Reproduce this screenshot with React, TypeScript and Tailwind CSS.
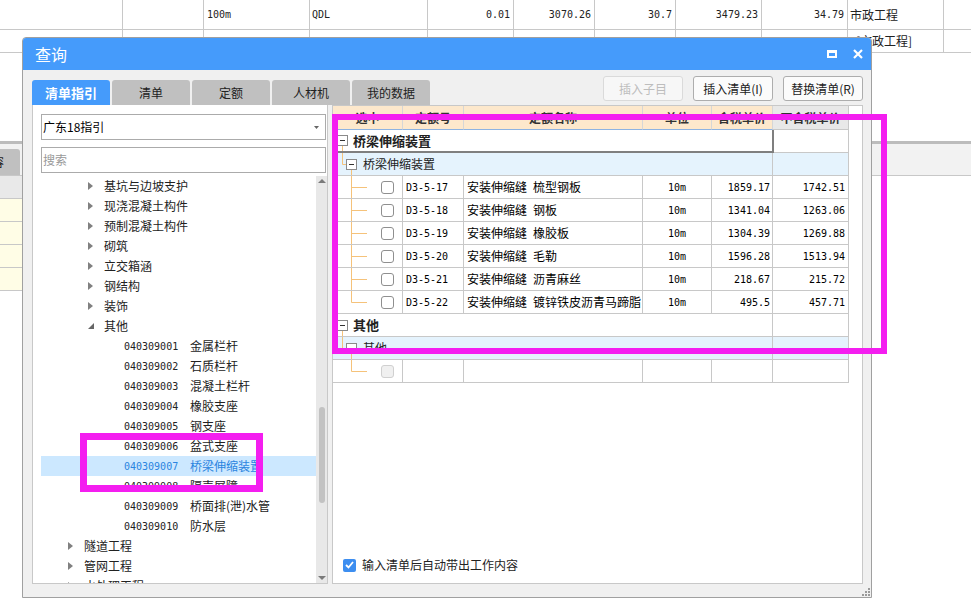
import React from "react";

const MONO = "font-['DejaVu_Sans_Mono',monospace] text-[10px]";
const ORANGE = "#f5c27a";

function BgRow1() {
  return (
    <div className="flex h-[30px] border-b border-[#c8c8c8] text-[12px]">
      <div className="w-[123px] shrink-0 border-r border-[#c8c8c8]" />
      <div className="w-[81px] shrink-0 border-r border-[#c8c8c8]" />
      <div className={"w-[106px] shrink-0 border-r border-[#c8c8c8] flex items-center pl-[3px] " + MONO}>100m</div>
      <div className={"w-[118px] shrink-0 border-r border-[#c8c8c8] flex items-center pl-[2px] " + MONO}>QDL</div>
      <div className={"w-[86px] shrink-0 border-r border-[#c8c8c8] flex items-center justify-end pr-[3px] " + MONO}>0.01</div>
      <div className={"w-[81px] shrink-0 border-r border-[#c8c8c8] flex items-center justify-end pr-[3px] " + MONO}>3070.26</div>
      <div className={"w-[81px] shrink-0 border-r border-[#c8c8c8] flex items-center justify-end pr-[3px] " + MONO}>30.7</div>
      <div className={"w-[86px] shrink-0 border-r border-[#c8c8c8] flex items-center justify-end pr-[3px] " + MONO}>3479.23</div>
      <div className={"w-[86px] shrink-0 border-r border-[#c8c8c8] flex items-center justify-end pr-[3px] " + MONO}>34.79</div>
      <div className="w-[96px] shrink-0 border-r border-[#c8c8c8] flex items-center pl-[2px]">市政工程</div>
      <div className="flex-1" />
    </div>
  );
}

function BgRow2() {
  return (
    <div className="flex h-[23px] border-b border-[#c8c8c8] text-[12px]">
      <div className="w-[123px] shrink-0 border-r border-[#c8c8c8]" />
      <div className="w-[81px] shrink-0 border-r border-[#c8c8c8]" />
      <div className="w-[106px] shrink-0 border-r border-[#c8c8c8]" />
      <div className="w-[118px] shrink-0 border-r border-[#c8c8c8]" />
      <div className="w-[86px] shrink-0 border-r border-[#c8c8c8]" />
      <div className="w-[81px] shrink-0 border-r border-[#c8c8c8]" />
      <div className="w-[81px] shrink-0 border-r border-[#c8c8c8]" />
      <div className="w-[86px] shrink-0 border-r border-[#c8c8c8]" />
      <div className="w-[86px] shrink-0 border-r border-[#c8c8c8]" />
      <div className="w-[96px] shrink-0 border-r border-[#c8c8c8] flex items-center pl-[8px]">[市政工程]</div>
      <div className="flex-1" />
    </div>
  );
}

function Background() {
  return (
    <div className="flex flex-col">
      <BgRow1 />
      <BgRow2 />
      <div className="h-[88px]" />
      <div className="h-[3px] bg-[#bcbcbc]" />
      <div className="h-[32px] bg-[#f2f2f2] border-b border-[#c8c8c8] flex">
        <div className="-ml-[60px] w-[80px] mt-[5px] h-[26px] bg-[#c0c0c0] rounded-t-[3px] flex items-center justify-center text-[12px]">
          工作内容
        </div>
      </div>
      <div className="flex">
        <div className="w-[300px] flex flex-col">
          <div className="h-[23px] bg-[#e9e9e9] border-b border-[#c8c8c8]" />
          <div className="h-[23px] bg-[#fffde6] border-b border-[#c8c8c8]" />
          <div className="h-[23px] bg-[#fffde6] border-b border-[#c8c8c8]" />
          <div className="h-[23px] bg-[#fffde6] border-b border-[#c8c8c8]" />
          <div className="h-[23px] bg-[#fffde6] border-b border-[#c8c8c8]" />
        </div>
      </div>
    </div>
  );
}

function ArrowRight() {
  return (
    <svg width="5" height="8" viewBox="0 0 5 8" className="shrink-0">
      <path d="M0 0L5 4L0 8Z" fill="#808080" />
    </svg>
  );
}

function ArrowOpen() {
  return (
    <svg width="6" height="6" viewBox="0 0 6 6" className="shrink-0">
      <path d="M6 0V6H0Z" fill="#666" />
    </svg>
  );
}

type TreeItem =
  | { kind: "cat2" | "open2" | "cat1"; text: string }
  | { kind: "code"; code: string; text: string; sel?: boolean };

const TREE: TreeItem[] = [
  { kind: "cat2", text: "基坑与边坡支护" },
  { kind: "cat2", text: "现浇混凝土构件" },
  { kind: "cat2", text: "预制混凝土构件" },
  { kind: "cat2", text: "砌筑" },
  { kind: "cat2", text: "立交箱涵" },
  { kind: "cat2", text: "钢结构" },
  { kind: "cat2", text: "装饰" },
  { kind: "open2", text: "其他" },
  { kind: "code", code: "040309001", text: "金属栏杆" },
  { kind: "code", code: "040309002", text: "石质栏杆" },
  { kind: "code", code: "040309003", text: "混凝土栏杆" },
  { kind: "code", code: "040309004", text: "橡胶支座" },
  { kind: "code", code: "040309005", text: "钢支座" },
  { kind: "code", code: "040309006", text: "盆式支座" },
  { kind: "code", code: "040309007", text: "桥梁伸缩装置", sel: true },
  { kind: "code", code: "040309008", text: "隔声屏障" },
  { kind: "code", code: "040309009", text: "桥面排(泄)水管" },
  { kind: "code", code: "040309010", text: "防水层" },
  { kind: "cat1", text: "隧道工程" },
  { kind: "cat1", text: "管网工程" },
  { kind: "cat1", text: "水处理工程" },
];

function TreeRow({ item }: { item: TreeItem }) {
  if (item.kind === "code") {
    return (
      <div
        className={
          item.sel
            ? "h-[20px] shrink-0 flex items-center pl-[83px] text-[12px] bg-[#cce8ff] text-[#2a84e0]"
            : "h-[20px] shrink-0 flex items-center pl-[83px] text-[12px]"
        }
      >
        <span className={"w-[66px] shrink-0 " + MONO}>{item.code}</span>
        <span className="whitespace-nowrap">{item.text}</span>
      </div>
    );
  }
  if (item.kind === "open2") {
    return (
      <div className="h-[20px] shrink-0 flex items-center pl-[47px] text-[12px]">
        <ArrowOpen />
        <span className="ml-[10px]">{item.text}</span>
      </div>
    );
  }
  if (item.kind === "cat1") {
    return (
      <div className="h-[20px] shrink-0 flex items-center pl-[27px] text-[12px]">
        <ArrowRight />
        <span className="ml-[11px]">{item.text}</span>
      </div>
    );
  }
  return (
    <div className="h-[20px] shrink-0 flex items-center pl-[47px] text-[12px]">
      <ArrowRight />
      <span className="ml-[11px]">{item.text}</span>
    </div>
  );
}

function LeftPanel() {
  return (
    <div className="w-[296px] h-full shrink-0 bg-white border-x border-b border-[#c8c8c8] flex flex-col">
      <div className="mt-[9px] ml-[8px] w-[285px] h-[26px] shrink-0 border border-[#ababab] flex items-center pl-[1px] pr-[6px] text-[12px] text-black">
        <span>广东18指引</span>
        <svg width="5" height="3" viewBox="0 0 5 3" className="ml-auto">
          <path d="M0 0H5L2.5 3Z" fill="#666" />
        </svg>
      </div>
      <div className="mt-[7px] ml-[8px] w-[285px] h-[26px] shrink-0 border border-[#ababab] flex items-center pl-[1px] text-[12px] text-[#999]">
        搜索
      </div>
      <div className="mt-[3px] ml-[8px] flex flex-1 min-h-0">
        <div className="w-[275px] flex flex-col overflow-hidden">
          {TREE.map((it, i) => (
            <TreeRow key={i} item={it} />
          ))}
        </div>
        <div className="w-[11px] bg-[#e8e8e8] flex flex-col items-center">
          <div className="h-[10px] flex items-center">
            <svg width="8" height="4" viewBox="0 0 8 4">
              <path d="M0 4L4 0L8 4Z" fill="#7a7a7a" />
            </svg>
          </div>
          <div className="mt-[221px] w-[6px] h-[96px] rounded-full bg-[#c2c2c2]" />
          <div className="flex-1" />
          <div className="h-[10px] flex items-center">
            <svg width="8" height="4" viewBox="0 0 8 4">
              <path d="M0 0L8 0L4 4Z" fill="#7a7a7a" />
            </svg>
          </div>
        </div>
      </div>
    </div>
  );
}

function MinusBox({ x, y }: { x: number; y: number }) {
  return (
    <g>
      <rect x={x + 0.5} y={y + 0.5} width="10" height="10" fill="white" stroke="#8a8a8a" />
      <line x1={x + 3} x2={x + 8} y1={y + 5.5} y2={y + 5.5} stroke="#333" />
    </g>
  );
}

function GroupRow({ label, selected }: { label: string; selected?: boolean }) {
  return (
    <div className="flex h-[23px] shrink-0">
      <div
        className={
          selected
            ? "w-[441px] shrink-0 border-r-2 border-b-2 border-[#7f7f7f] flex items-center"
            : "w-[440px] shrink-0 border-r border-b border-[#c8c8c8] flex items-center"
        }
      >
        <svg width="20" height="21" viewBox="0 0 20 21" className="shrink-0">
          <line x1="9.5" x2="9.5" y1="16" y2="21" stroke={ORANGE} />
          <MinusBox x={4} y={5} />
        </svg>
        <span className="text-[13px] font-bold text-[#222]">{label}</span>
      </div>
      <div
        className={
          selected
            ? "w-[75px] shrink-0 border-r border-b border-[#c8c8c8]"
            : "w-[76px] shrink-0 border-r border-b border-[#c8c8c8]"
        }
      />
    </div>
  );
}

function SubRow({ label }: { label: string }) {
  return (
    <div className="flex h-[23px] shrink-0 bg-[#e5f3fd]">
      <div className="w-[440px] shrink-0 border-r border-b border-[#c8c8c8] flex items-center">
        <svg width="30" height="22" viewBox="0 0 30 22" className="shrink-0">
          <line x1="9.5" x2="9.5" y1="0" y2="11.5" stroke={ORANGE} />
          <line x1="9.5" x2="13" y1="11.5" y2="11.5" stroke={ORANGE} />
          <line x1="18.5" x2="18.5" y1="16" y2="22" stroke={ORANGE} />
          <MinusBox x={13} y={6} />
        </svg>
        <span className="text-[12px] text-[#222]">{label}</span>
      </div>
      <div className="w-[76px] shrink-0 border-r border-b border-[#c8c8c8]" />
    </div>
  );
}

type Item = { code: string; a: string; b: string; p1: string; p2: string };

const ITEMS: Item[] = [
  { code: "D3-5-17", a: "安装伸缩缝", b: "梳型钢板", p1: "1859.17", p2: "1742.51" },
  { code: "D3-5-18", a: "安装伸缩缝", b: "钢板", p1: "1341.04", p2: "1263.06" },
  { code: "D3-5-19", a: "安装伸缩缝", b: "橡胶板", p1: "1304.39", p2: "1269.88" },
  { code: "D3-5-20", a: "安装伸缩缝", b: "毛勒", p1: "1596.28", p2: "1513.94" },
  { code: "D3-5-21", a: "安装伸缩缝", b: "沥青麻丝", p1: "218.67", p2: "215.72" },
  { code: "D3-5-22", a: "安装伸缩缝", b: "镀锌铁皮沥青马蹄脂", p1: "495.5", p2: "457.71" },
];

function TreeCell({ last, disabled }: { last?: boolean; disabled?: boolean }) {
  return (
    <div className="w-[70px] shrink-0 border-r border-b border-[#c8c8c8] flex items-center">
      <svg width="48" height="22" viewBox="0 0 48 22" className="shrink-0">
        <line x1="18.5" x2="18.5" y1="0" y2={last ? 11.5 : 22} stroke={ORANGE} />
        <line x1="18.5" x2="34" y1="11.5" y2="11.5" stroke={ORANGE} />
      </svg>
      <div
        className={
          disabled
            ? "w-[13px] h-[13px] rounded-[3px] border border-[#d0d0d0] bg-[#f0f0f0]"
            : "w-[13px] h-[13px] rounded-[3px] border border-[#8f8f8f] bg-white"
        }
      />
    </div>
  );
}

function DataRow({ it, last }: { it: Item; last?: boolean }) {
  return (
    <div className="flex h-[23px] shrink-0 text-[12px] text-black">
      <TreeCell last={last} />
      <div className={"w-[61px] shrink-0 border-r border-b border-[#c8c8c8] flex items-center pl-[3px] " + MONO}>{it.code}</div>
      <div className="w-[179px] shrink-0 border-r border-b border-[#c8c8c8] flex items-center pl-[3px] whitespace-nowrap">
        {it.a}
        <span className="ml-[6px]">{it.b}</span>
      </div>
      <div className={"w-[69px] shrink-0 border-r border-b border-[#c8c8c8] flex items-center justify-center " + MONO}>10m</div>
      <div className={"w-[61px] shrink-0 border-r border-b border-[#c8c8c8] flex items-center justify-end pr-[2px] " + MONO}>{it.p1}</div>
      <div className={"w-[76px] shrink-0 border-r border-b border-[#c8c8c8] flex items-center justify-end pr-[3px] " + MONO}>{it.p2}</div>
    </div>
  );
}

function EmptyRow() {
  return (
    <div className="flex h-[23px] shrink-0">
      <TreeCell last disabled />
      <div className="w-[61px] shrink-0 border-r border-b border-[#c8c8c8]" />
      <div className="w-[179px] shrink-0 border-r border-b border-[#c8c8c8]" />
      <div className="w-[69px] shrink-0 border-r border-b border-[#c8c8c8]" />
      <div className="w-[61px] shrink-0 border-r border-b border-[#c8c8c8]" />
      <div className="w-[76px] shrink-0 border-r border-b border-[#c8c8c8]" />
    </div>
  );
}

function RightPanel() {
  return (
    <div className="w-[531px] h-full shrink-0 bg-white border border-[#c8c8c8] flex flex-col">
      <div className="w-[516px] flex flex-col">
        <div className="flex h-[24px] shrink-0 text-[12px] font-bold text-[#333]">
          <div className="w-[70px] shrink-0 bg-[#fde8cc] border-r border-r-[#d6d6d6] border-b border-b-[#8db3e2] flex items-center justify-center">选中</div>
          <div className="w-[61px] shrink-0 bg-[#fde8cc] border-r border-r-[#d6d6d6] border-b border-b-[#8db3e2] flex items-center justify-center">定额号</div>
          <div className="w-[179px] shrink-0 bg-[#fde8cc] border-r border-r-[#d6d6d6] border-b border-b-[#8db3e2] flex items-center justify-center">定额名称</div>
          <div className="w-[69px] shrink-0 bg-[#fde8cc] border-r border-r-[#d6d6d6] border-b border-b-[#8db3e2] flex items-center justify-center">单位</div>
          <div className="w-[61px] shrink-0 bg-[#fde8cc] border-r border-r-[#d6d6d6] border-b border-b-[#8db3e2] flex items-center justify-center">含税单价</div>
          <div className="w-[76px] shrink-0 bg-[#e8e8e8] border-r border-b border-[#c8c8c8] flex items-center justify-center">不含税单价</div>
        </div>
        <GroupRow label="桥梁伸缩装置" selected />
        <SubRow label="桥梁伸缩装置" />
        {ITEMS.map((it, i) => (
          <DataRow key={it.code} it={it} last={i === ITEMS.length - 1} />
        ))}
        <GroupRow label="其他" />
        <SubRow label="其他" />
        <EmptyRow />
      </div>
      <div className="flex-1" />
      <div className="flex items-center pl-[10px] mb-[11px] h-[14px]">
        <div className="w-[13px] h-[13px] rounded-[2px] bg-[#3d8ef0] flex items-center justify-center">
          <svg width="9" height="8" viewBox="0 0 9 8">
            <path d="M1 4L3.5 6.5L8 1" fill="none" stroke="white" strokeWidth="1.8" />
          </svg>
        </div>
        <span className="ml-[6px] text-[12px] text-[#222]">输入清单后自动带出工作内容</span>
      </div>
    </div>
  );
}

function Dialog() {
  return (
    <div className="absolute left-[22px] top-[37px] w-[850px] h-[561px] border border-[#a0a0a0] rounded-t-[4px] bg-[#f0f0f0] flex flex-col overflow-hidden">
      <div className="h-[32px] shrink-0 bg-[#459bfb] flex items-center pl-[12px] pr-[8px] text-white">
        <span className="text-[16px] leading-none">查询</span>
        <div className="ml-auto flex items-center gap-[16px]">
          <div className="w-[10px] h-[8px] border-2 border-t-[3px] border-white" />
          <svg width="10" height="10" viewBox="0 0 10 10">
            <path d="M1 1L9 9M9 1L1 9" stroke="white" strokeWidth="2.2" />
          </svg>
        </div>
      </div>
      <div className="h-[35px] shrink-0 flex justify-between pl-[9px] pr-[8px]">
        <div className="flex gap-[2px] mt-[10px] h-[25px]">
          <div className="w-[78px] h-[25px] rounded-t-[3px] bg-[#459bfb] text-white font-bold text-[13px] flex items-center justify-center">清单指引</div>
          <div className="w-[78px] h-[25px] rounded-t-[3px] bg-[#c0c0c0] text-[#222] text-[12px] flex items-center justify-center">清单</div>
          <div className="w-[78px] h-[25px] rounded-t-[3px] bg-[#c0c0c0] text-[#222] text-[12px] flex items-center justify-center">定额</div>
          <div className="w-[78px] h-[25px] rounded-t-[3px] bg-[#c0c0c0] text-[#222] text-[12px] flex items-center justify-center">人材机</div>
          <div className="w-[78px] h-[25px] rounded-t-[3px] bg-[#c0c0c0] text-[#222] text-[12px] flex items-center justify-center">我的数据</div>
        </div>
        <div className="flex gap-[10px] mt-[6px] h-[25px]">
          <div className="w-[80px] h-[25px] rounded-[3px] border border-[#dadada] bg-[#f7f7f7] text-[#bdbdbd] text-[12px] flex items-center justify-center">插入子目</div>
          <div className="w-[80px] h-[25px] rounded-[3px] border border-[#adadad] bg-[#fbfbfb] text-[#222] text-[12px] flex items-center justify-center">插入清单(I)</div>
          <div className="w-[80px] h-[25px] rounded-[3px] border border-[#adadad] bg-[#fbfbfb] text-[#222] text-[12px] flex items-center justify-center">替换清单(R)</div>
        </div>
      </div>
      <div className="h-[479px] shrink-0 flex gap-[4px] pl-[9px] pr-[8px]">
        <LeftPanel />
        <RightPanel />
      </div>
      <div className="flex-1 flex justify-end items-end pr-[1px] pb-[1px]">
        <svg width="8" height="8" viewBox="0 0 8 8">
          <rect x="6" y="0" width="2" height="2" fill="#9a9a9a" />
          <rect x="3" y="3" width="2" height="2" fill="#9a9a9a" />
          <rect x="6" y="3" width="2" height="2" fill="#9a9a9a" />
          <rect x="0" y="6" width="2" height="2" fill="#9a9a9a" />
          <rect x="3" y="6" width="2" height="2" fill="#9a9a9a" />
          <rect x="6" y="6" width="2" height="2" fill="#9a9a9a" />
        </svg>
      </div>
    </div>
  );
}

export default function App() {
  return (
    <div className="relative w-[971px] h-[608px] overflow-hidden bg-white font-['Noto_Sans_CJK_SC',sans-serif] text-[#222]">
      <Background />
      <Dialog />
      <div className="absolute left-[80px] top-[433px] w-[183px] h-[59px] border-[7px] border-[#f41ef0]" />
      <div className="absolute left-[332px] top-[114px] w-[555px] h-[240px] border-[6px] border-[#f41ef0]" />
    </div>
  );
}
